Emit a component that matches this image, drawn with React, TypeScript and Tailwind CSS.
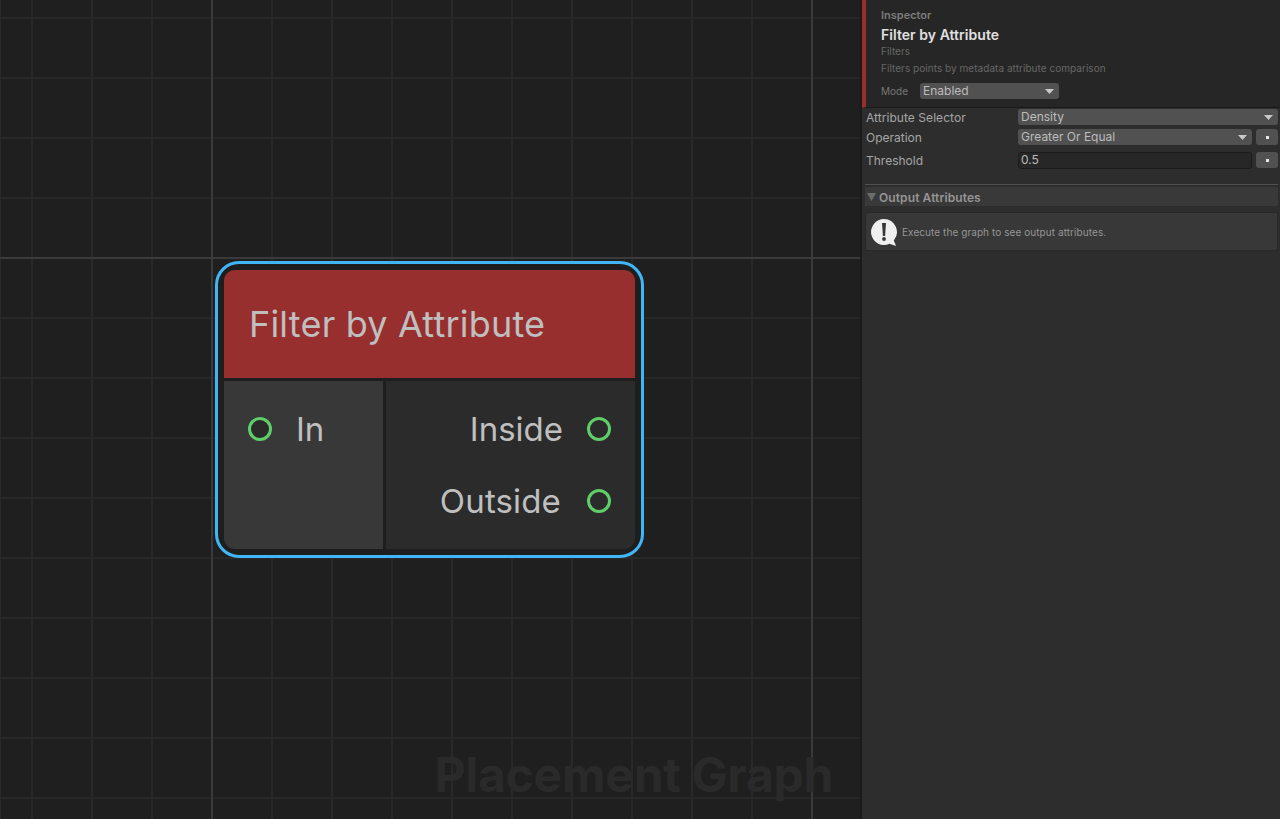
const ui = "font-['Inter','Liberation_Sans',sans-serif]";

function Port({ className = "" }: { className?: string }) {
  return <div className={`h-6 w-6 rounded-full border-[3px] border-[#5fce68] bg-[#2b2b2b] ${className}`} />;
}

function Caret() {
  return (
    <svg width="9" height="5" viewBox="0 0 9 5" className="shrink-0">
      <path d="M0 0h9L4.5 5z" fill="#c8c8c8" />
    </svg>
  );
}

function Select({ value, className = "" }: { value: string; className?: string }) {
  return (
    <div className={`flex h-4 items-center justify-between rounded-[3px] bg-[#515151] pl-[3px] pr-[5px] text-xs text-[#bcbcbc] ${className}`}>
      <span>{value}</span>
      <Caret />
    </div>
  );
}

function DotButton() {
  return (
    <div className="flex h-4 w-[22px] shrink-0 items-center justify-center rounded-[3px] bg-[#515151]">
      <div className="h-[3px] w-[3px] bg-[#e6e6e6]" />
    </div>
  );
}

export default function App() {
  return (
    <div className={`flex h-[819px] w-[1280px] overflow-hidden bg-[#2d2d2d] ${ui}`}>
      {/* graph canvas */}
      <div className="relative h-full w-[860px] shrink-0 overflow-hidden bg-[#1f1f1f]">
        <div className="absolute inset-0 bg-[linear-gradient(to_right,#292929_2px,transparent_2px),linear-gradient(to_bottom,#282828_2px,transparent_2px)] bg-[size:60px_60px] bg-[position:31px_17px]" />
        <div className="absolute inset-y-0 left-0 w-px bg-[#2b2b2b]" />
        <div className="absolute inset-y-0 left-[211px] w-[2px] bg-[#3a3a3a]" />
        <div className="absolute inset-y-0 left-[811px] w-[2px] bg-[#3a3a3a]" />
        <div className="absolute inset-x-0 top-[257px] h-[2px] bg-[#3a3a3a]" />

        <div className="absolute bottom-[15px] right-[27px] text-[48px] leading-[58px] font-bold tracking-[-0.3px] text-[#2a2a2a]">
          Placement Graph
        </div>

        {/* node */}
        <div className="absolute left-[215px] top-[261px] h-[297px] w-[429px] rounded-[24px] border-[3px] border-[#41b6f6] bg-[#1e1e1e] p-[6px]">
          <div className="flex h-full flex-col overflow-hidden rounded-[11px]">
            <div className="flex h-[108px] shrink-0 items-center bg-[#982f2f] pl-[25px] text-[36px] leading-none tracking-[0.2px] text-[#bfbfbf]">
              Filter by Attribute
            </div>
            <div className="mt-[3px] flex min-h-0 flex-1 gap-[3px]">
              <div className="w-[159px] bg-[#383838] pl-6 pt-[36px]">
                <div className="flex h-6 items-center gap-6 text-[33px] text-[#bfbfbf]">
                  <Port />
                  <span className="leading-none">In</span>
                </div>
              </div>
              <div className="flex flex-1 flex-col gap-12 bg-[#2b2b2b] pr-6 pt-[36px] text-[33px] text-[#bfbfbf]">
                <div className="flex h-6 items-center justify-end gap-6">
                  <span className="leading-none">Inside</span>
                  <Port />
                </div>
                <div className="flex h-6 items-center justify-end gap-[26px]">
                  <span className="leading-none tracking-[0.15px]">Outside</span>
                  <Port />
                </div>
              </div>
            </div>
          </div>
        </div>
      </div>

      {/* inspector */}
      <div className="flex h-full min-w-0 flex-1 flex-col border-l-2 border-[#1a1a1a]">
        <div className="flex h-[108px] shrink-0 flex-col border-b border-[#1a1a1a] border-l-[4px] border-l-[#982f2f] bg-[#262626] pl-[15px] pt-[9px]">
          <div className="text-[11px] leading-[13px] font-semibold text-[#7c7c7c]">Inspector</div>
          <div className="mt-[4px] text-sm leading-[17px] font-semibold tracking-[0.05px] text-[#e0e0e0]">Filter by Attribute</div>
          <div className="mt-[2px] text-[10px] leading-[13px] text-[#666666]">Filters</div>
          <div className="mt-[4px] text-[10px] leading-[13px] tracking-[0.04px] text-[#666666]">Filters points by metadata attribute comparison</div>
          <div className="mt-[8px] flex items-center gap-[11px]">
            <span className="w-[28px] text-[10px] text-[#787878]">Mode</span>
            <Select value="Enabled" className="w-[139px]" />
          </div>
        </div>

        <div className="flex flex-col pl-[3px] pr-[2px] text-xs text-[#a6a6a6]">
          <div className="flex h-[18px] items-center pl-px">
            <span className="w-[152px] shrink-0 translate-y-px tracking-[0.05px]">Attribute Selector</span>
            <Select value="Density" className="flex-1" />
          </div>
          <div className="mt-[2px] flex h-[18px] items-center gap-[4px] pl-px">
            <span className="w-[148px] shrink-0 translate-y-px">Operation</span>
            <Select value="Greater Or Equal" className="flex-1" />
            <DotButton />
          </div>
          <div className="mt-[5px] flex h-[18px] items-center gap-[4px] pl-px">
            <span className="w-[148px] shrink-0 translate-y-px">Threshold</span>
            <div className="flex h-[17px] flex-1 items-center rounded-[3px] border border-[#1b1b1b] bg-[#272727] pl-[2px] text-xs text-[#bcbcbc]">0.5</div>
            <DotButton />
          </div>

          <div className="mt-[15px] h-px bg-[#505050]" />
          <div className="mt-[2px] flex h-[19px] items-center gap-[3px] bg-[#393939] pl-[2px] text-xs font-semibold tracking-[0.1px] text-[#959595]">
            <svg width="9" height="8" viewBox="0 0 9 8" className="shrink-0">
              <path d="M0 0h9L4.5 8z" fill="#6d6d6d" />
            </svg>
            <span className="translate-y-px">Output Attributes</span>
          </div>
          <div className="mt-[6px] flex h-[39px] items-center gap-[4px] rounded-[2px] border border-[#282828] bg-[#383838] pl-[5px]">
            <svg width="27" height="30" viewBox="0 0 27 30" className="shrink-0">
              <path d="M13 2a13 13 0 1 0 5.5 24.8L25 29l-2.2-5.6A13 13 0 0 0 13 2z" fill="#f0f0f0" />
              <path d="M11 6h4l-.9 13h-2.2z" fill="#383838" />
              <circle cx="13" cy="22" r="1.9" fill="#383838" />
            </svg>
            <span className="translate-y-[1px] text-[10px] tracking-[0.07px] text-[#969696]">Execute the graph to see output attributes.</span>
          </div>
        </div>
      </div>
    </div>
  );
}
